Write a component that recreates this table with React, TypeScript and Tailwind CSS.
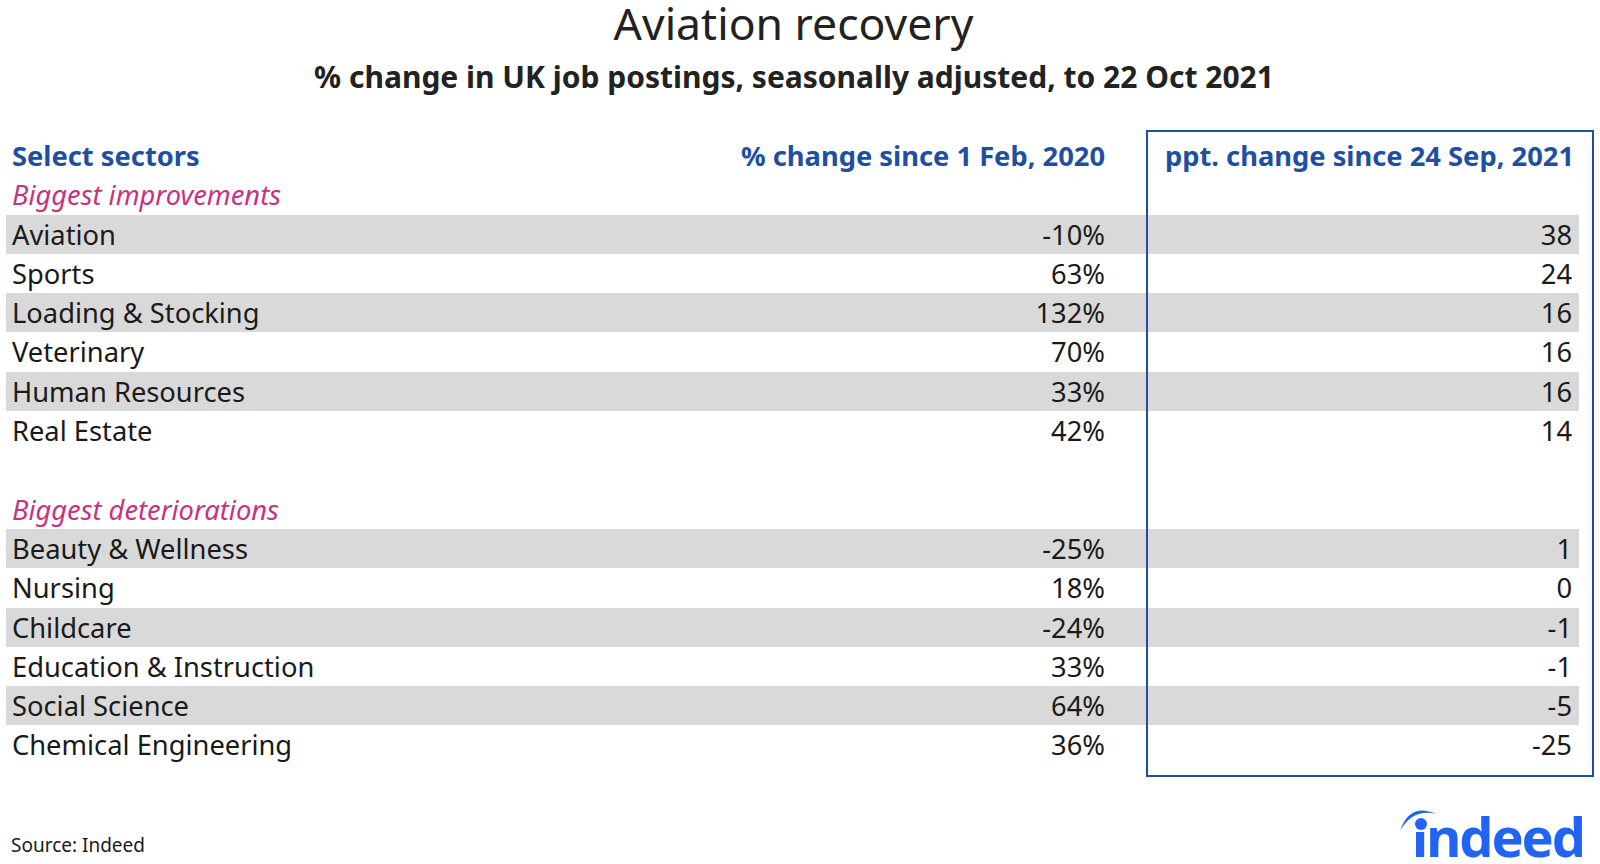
import React from 'react';

type SectorRow = {
  sector: string;
  since2020: string;
  sinceSep: string;
};

const improvements: SectorRow[] = [
  { sector: 'Aviation', since2020: '-10%', sinceSep: '38' },
  { sector: 'Sports', since2020: '63%', sinceSep: '24' },
  { sector: 'Loading & Stocking', since2020: '132%', sinceSep: '16' },
  { sector: 'Veterinary', since2020: '70%', sinceSep: '16' },
  { sector: 'Human Resources', since2020: '33%', sinceSep: '16' },
  { sector: 'Real Estate', since2020: '42%', sinceSep: '14' },
];

const deteriorations: SectorRow[] = [
  { sector: 'Beauty & Wellness', since2020: '-25%', sinceSep: '1' },
  { sector: 'Nursing', since2020: '18%', sinceSep: '0' },
  { sector: 'Childcare', since2020: '-24%', sinceSep: '-1' },
  { sector: 'Education & Instruction', since2020: '33%', sinceSep: '-1' },
  { sector: 'Social Science', since2020: '64%', sinceSep: '-5' },
  { sector: 'Chemical Engineering', since2020: '36%', sinceSep: '-25' },
];

function DataRow({ row, shaded }: { row: SectorRow; shaded: boolean }) {
  return (
    <div
      className={`flex h-[39.3px] items-center text-[27.3px] leading-none text-[#1a1a1a] ${
        shaded ? 'bg-[#d9d9d9]' : ''
      }`}
    >
      <div className="flex-1 pl-[6px]">{row.sector}</div>
      <div className="text-right">{row.since2020}</div>
      <div className="w-[474px] pr-[7px] text-right">{row.sinceSep}</div>
    </div>
  );
}

function GroupLabel({ children }: { children: React.ReactNode }) {
  return (
    <div className="flex h-[39.3px] items-center pl-[6px] text-[27.3px] italic leading-none text-[#c8327f]">
      {children}
    </div>
  );
}

// indeed wordmark: text plus the arc and the big dot over the i
function IndeedLogo() {
  return (
    <div className="relative h-[60px] w-[195px] text-[#2164f3]">
      <svg className="absolute left-0 top-0" width="44" height="34" viewBox="0 0 44 34">
        <path d="M3 29 Q 13 0 39 12 Q 16 6 3 29 Z" fill="#2164f3" />
      </svg>
      <div className="absolute left-[15px] top-[7px] whitespace-nowrap text-[54px] font-bold leading-[54px] tracking-[-2px]">
        <span className="inline-block [clip-path:inset(23px_0_0_0)]">i</span>ndeed
      </div>
      <div className="absolute left-[18px] top-[16px] h-[12px] w-[12px] rounded-full bg-[#2164f3]" />
    </div>
  );
}

export default function App() {
  return (
    <div className="flex h-[864px] w-[1600px] flex-col overflow-hidden bg-white font-['Noto_Sans',sans-serif]">
      {/* Titles */}
      <div className="flex h-[46px] items-center justify-center pr-[13px] text-[44.5px] leading-[46px] text-[#222]">
        Aviation recovery
      </div>
      <div className="mt-[10px] flex h-[42px] items-center justify-center pr-[12px] text-[30px] font-bold leading-[42px] text-[#222]">
        % change in UK job postings, seasonally adjusted, to 22 Oct 2021
      </div>

      {/* Table */}
      <div className="relative mt-[38px] w-[1579px] pl-[6px]">
        <div className="flex h-[39.3px] items-center text-[27.3px] font-bold leading-none text-[#1f4fa0]">
          <div className="flex-1 pl-[6px]">Select sectors</div>
          <div className="text-right">% change since 1 Feb, 2020</div>
          <div className="w-[474px] pr-[5px] text-right">ppt. change since 24 Sep, 2021</div>
        </div>

        <GroupLabel>Biggest improvements</GroupLabel>
        {improvements.map((row, i) => (
          <DataRow key={row.sector} row={row} shaded={i % 2 === 0} />
        ))}

        <div className="h-[39.3px]" />
        <GroupLabel>Biggest deteriorations</GroupLabel>
        {deteriorations.map((row, i) => (
          <DataRow key={row.sector} row={row} shaded={i % 2 === 0} />
        ))}

        {/* highlight box around the latest column */}
        <div className="pointer-events-none absolute left-[1146px] top-[-6px] h-[647px] w-[448px] border-2 border-[#1f4fa0]" />
      </div>

      {/* Footer */}
      <div className="mt-auto flex h-[80px] justify-between pl-[11px] pr-[8px]">
        <div className="pt-[52px] text-[19px] leading-none text-[#1a1a1a]">Source: Indeed</div>
        <div className="pt-[18px]">
          <IndeedLogo />
        </div>
      </div>
    </div>
  );
}
